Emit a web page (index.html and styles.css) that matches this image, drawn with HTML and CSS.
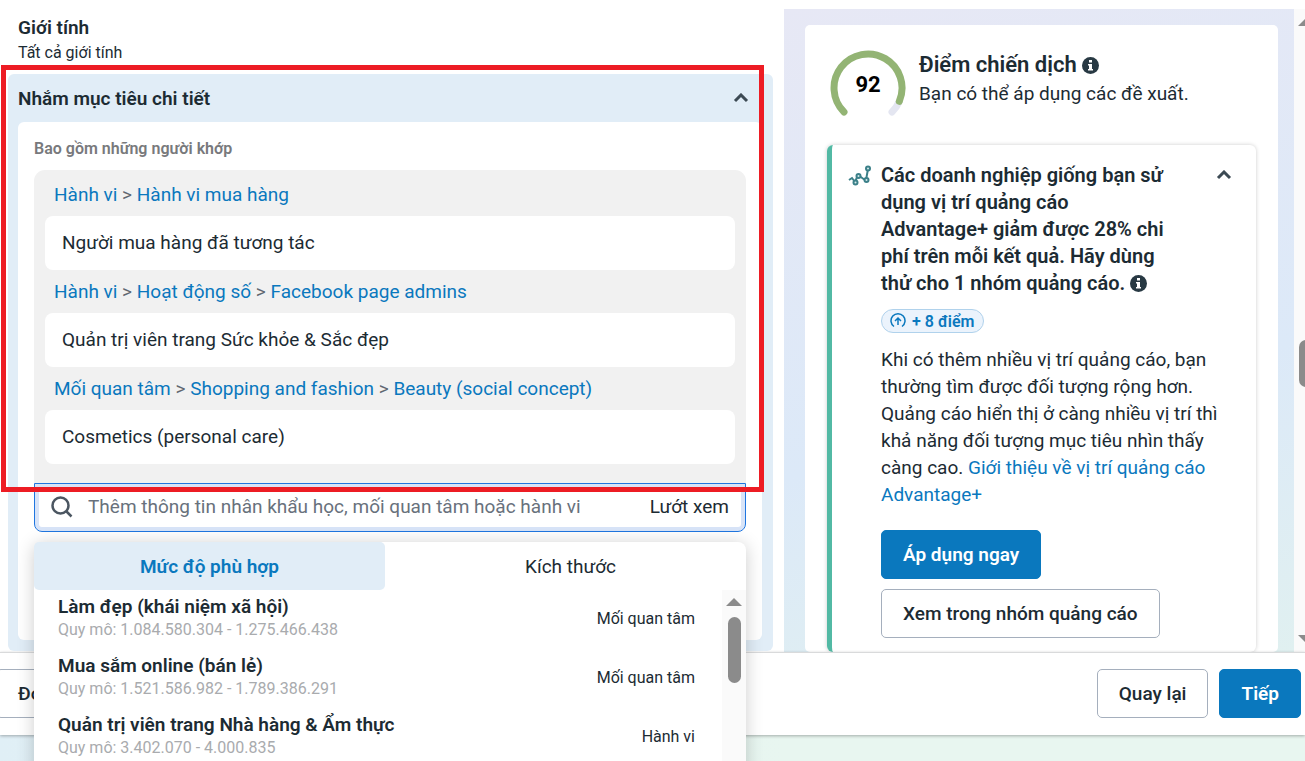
FILE: index.html
```html
<!DOCTYPE html>
<html lang="vi">

<head>
    <meta charset="UTF-8">
    <meta name="viewport" content="width=device-width, initial-scale=1.0">
    <title>Nhóm quảng cáo</title>
    <link rel="stylesheet" href="styles.css">
</head>

<body>
    <div class="workspace">
        <main class="editor">
            <div class="gender">
                <h3>Giới tính</h3>
                <p>Tất cả giới tính</p>
            </div>

            <section class="targeting">
                <header class="targeting-header">
                    <h3>Nhắm mục tiêu chi tiết</h3>
                    <button class="toggle" type="button" aria-label="Thu gọn">
                        <svg width="16" height="10" viewBox="0 0 16 10"><path d="M2 8l6-6 6 6" /></svg>
                    </button>
                </header>

                <div class="targeting-body">
                    <label class="include-label" for="search">Bao gồm những người khớp</label>

                    <div class="picker">
                        <div class="crumbs"><a href="#">Hành vi</a> &gt; <a href="#">Hành vi mua hàng</a></div>
                        <div class="picked">Người mua hàng đã tương tác</div>
                        <div class="crumbs"><a href="#">Hành vi</a> &gt; <a href="#">Hoạt động số</a> &gt; <a href="#">Facebook page admins</a></div>
                        <div class="picked">Quản trị viên trang Sức khỏe &amp; Sắc đẹp</div>
                        <div class="crumbs"><a href="#">Mối quan tâm</a> &gt; <a href="#">Shopping and fashion</a> &gt; <a href="#">Beauty (social concept)</a></div>
                        <div class="picked">Cosmetics (personal care)</div>
                    </div>

                    <div class="search">
                        <div class="search-box">
                            <svg width="22" height="22" viewBox="0 0 22 22"><circle cx="9.5" cy="9.5" r="8" /><path d="M15.5 15.5l5 5" /></svg>
                            <input id="search" type="text" placeholder="Thêm thông tin nhân khẩu học, mối quan tâm hoặc hành vi">
                            <button type="button">Lướt xem</button>
                        </div>

                        <div class="dropdown">
                            <div class="tabs">
                                <button class="tab active" type="button">Mức độ phù hợp</button>
                                <button class="tab" type="button">Kích thước</button>
                            </div>
                            <div class="results">
                                <ul>
                                    <li>
                                        <div>
                                            <strong>Làm đẹp (khái niệm xã hội)</strong>
                                            <small>Quy mô: 1.084.580.304 - 1.275.466.438</small>
                                        </div>
                                        <span>Mối quan tâm</span>
                                    </li>
                                    <li>
                                        <div>
                                            <strong>Mua sắm online (bán lẻ)</strong>
                                            <small>Quy mô: 1.521.586.982 - 1.789.386.291</small>
                                        </div>
                                        <span>Mối quan tâm</span>
                                    </li>
                                    <li>
                                        <div>
                                            <strong>Quản trị viên trang Nhà hàng &amp; Ẩm thực</strong>
                                            <small>Quy mô: 3.402.070 - 4.000.835</small>
                                        </div>
                                        <span>Hành vi</span>
                                    </li>
                                </ul>
                                <div class="results-scroll">
                                    <svg width="16" height="8" viewBox="0 0 16 8"><path d="M0 8l8-8 8 8z" /></svg>
                                    <i></i>
                                </div>
                            </div>
                        </div>
                    </div>
                </div>
            </section>

            <div class="highlight"></div>
        </main>

        <aside class="side">
            <div class="score-card">
                <div class="score">
                    <div class="gauge">
                        <svg width="76" height="76" viewBox="0 0 76 76">
                            <path class="track" d="M62 62A34 34 0 0 0 69.300 51.300" />
                            <path class="value" d="M14 62A34 34 0 1 1 69.300 51.300" />
                        </svg>
                        <b>92</b>
                    </div>
                    <div>
                        <h2>Điểm chiến dịch
                            <svg class="info" width="17" height="17" viewBox="0 0 17 17"><circle cx="8.500" cy="8.500" r="8.500" /><path d="M7 3h3v2.500H7zM6 7h4v5h1v1.500H6V12h1V8.500H6z" /></svg>
                        </h2>
                        <p>Bạn có thể áp dụng các đề xuất.</p>
                    </div>
                </div>

                <article class="tip">
                    <svg class="tip-icon" width="24" height="22" viewBox="0 0 24 22">
                        <path d="M1 15l3-2 3 4M7 17l3-7M10 10l7 5M18 15l2-11" />
                        <circle cx="7.500" cy="17.500" r="2" />
                        <circle cx="10.500" cy="11" r="2" />
                        <circle cx="18.500" cy="15" r="2" />
                        <circle cx="20" cy="3.500" r="2" />
                    </svg>
                    <div class="tip-content">
                        <div class="tip-header">
                            <h3>
                                Các doanh nghiệp giống bạn sử<br>
                                dụng vị trí quảng cáo<br>
                                Advantage+ giảm được 28% chi<br>
                                phí trên mỗi kết quả. Hãy dùng<br>
                                thử cho 1 nhóm quảng cáo.
                                <svg class="info" width="17" height="17" viewBox="0 0 17 17"><circle cx="8.500" cy="8.500" r="8.500" /><path d="M7 3h3v2.500H7zM6 7h4v5h1v1.500H6V12h1V8.500H6z" /></svg>
                            </h3>
                            <button class="toggle" type="button" aria-label="Thu gọn">
                                <svg width="16" height="10" viewBox="0 0 16 10"><path d="M2 8l6-6 6 6" /></svg>
                            </button>
                        </div>
                        <span class="points">
                            <svg width="16" height="16" viewBox="0 0 16 16"><path d="M4 13.500a7 7 0 1 1 8 0M8 12V5M5 8l3-3 3 3" /></svg>
                            + 8 điểm
                        </span>
                        <p>Khi có thêm nhiều vị trí quảng cáo, bạn thường tìm được đối tượng rộng hơn. Quảng cáo hiển thị ở càng nhiều vị trí thì khả năng đối tượng mục tiêu nhìn thấy càng cao. <a href="#">Giới thiệu về vị trí quảng cáo Advantage+</a></p>
                        <button class="btn primary" type="button">Áp dụng ngay</button>
                        <button class="btn" type="button">Xem trong nhóm quảng cáo</button>
                    </div>
                </article>
            </div>

            <div class="side-scroll">
                <svg width="16" height="8" viewBox="0 0 16 8"><path d="M0 8l8-8 8 8z" /></svg>
                <i></i>
                <svg width="16" height="8" viewBox="0 0 16 8"><path d="M0 0l8 8 8-8z" /></svg>
            </div>
        </aside>
    </div>

    <footer class="footer">
        <button class="btn close" type="button">Đóng</button>
        <button class="btn" type="button">Quay lại</button>
        <button class="btn primary" type="button">Tiếp</button>
    </footer>
</body>

</html>
```

FILE: styles.css
```css
* {
    box-sizing: border-box;
}

body {
    margin: 0;
    height: 100vh;
    padding-bottom: 26px;
    display: flex;
    flex-direction: column;
    overflow: hidden;
    background: linear-gradient(90deg, #e0eff6, #e8f6f0 60%);
    color: #1c2b33;
    font-family: Roboto, "Liberation Sans", sans-serif;
    font-size: 19px;
    line-height: 27px;
}

h2, h3, p, ul {
    margin: 0;
    padding: 0;
}

h3 {
    font-size: 19px;
    font-weight: 600;
}

a {
    color: #0a78be;
    text-decoration: none;
}

button, input {
    font: inherit;
    color: inherit;
    border: none;
    background: none;
    padding: 0;
}

.workspace {
    flex: 1;
    min-height: 0;
    display: flex;
    background: #fff;
}

/* left column */
.editor {
    position: relative;
    z-index: 1;
    flex: 1;
    min-width: 0;
    display: flex;
    flex-direction: column;
    padding: 14px 11px 1px 8px;
}

.gender {
    height: 60px;
    padding-left: 10px;
}

.gender p {
    font-size: 16px;
    line-height: 24px;
}

.targeting {
    flex: 1;
    display: flex;
    flex-direction: column;
    padding: 0 11px 11px 10px;
    background: #e1edf7;
    border-radius: 6px;
}

.targeting-header {
    height: 48px;
    display: flex;
    align-items: center;
    justify-content: space-between;
    padding-right: 13px;
}

.toggle {
    display: flex;
    cursor: pointer;
}

.toggle path {
    fill: none;
    stroke: #3c4a54;
    stroke-width: 3;
}

.targeting-body {
    flex: 1;
    padding: 15px 16px 0;
    background: #fff;
    border-radius: 6px;
}

.include-label {
    display: block;
    height: 33px;
    line-height: 24px;
    font-size: 16px;
    font-weight: 600;
    color: #78797c;
}

.picker {
    padding: 3px 11px 19px;
    background: #f1f1f1;
    border-radius: 11px 11px 0 0;
}

.crumbs {
    padding: 8px 9px;
    color: #606770;
}

.picked {
    padding: 13px 17px 14px;
    background: #fff;
    border-radius: 8px;
}

.search {
    position: relative;
}

.search-box {
    display: flex;
    align-items: center;
    height: 49px;
    padding: 0 12px 2px;
    background: #fff;
    border: 1px solid #1f76e0;
    border-radius: 0 0 8px 8px;
    box-shadow: inset 0 0 0 4px #d8e4f8;
}

.search-box svg {
    margin: 0 15px 0 4px;
    fill: none;
    stroke: #4b5661;
    stroke-width: 2.5;
}

.search-box input {
    flex: 1;
    min-width: 0;
    outline: none;
}

.search-box input::placeholder {
    color: #68717c;
    opacity: 1;
}

.search-box button {
    margin-right: 4px;
}

.dropdown {
    position: absolute;
    top: 59px;
    left: 0;
    width: 100%;
    background: #fff;
    border-radius: 8px;
    box-shadow: 0 2px 18px rgba(0, 0, 0, 0.2);
}

.tabs {
    display: flex;
    height: 48px;
}

.tab {
    flex: 1;
    padding-left: 10px;
    border-radius: 5px;
}

.tab.active {
    flex: none;
    width: 351px;
    padding: 0;
    background: #e1edf7;
    color: #0a78be;
    font-weight: 600;
}

.results {
    display: flex;
}

.results ul {
    flex: 1;
    list-style: none;
    padding: 0 27px 30px 24px;
}

.results li {
    display: flex;
    align-items: center;
    justify-content: space-between;
    height: 59px;
    padding-bottom: 6px;
}

.results strong {
    display: block;
    font-weight: 600;
}

.results small {
    display: block;
    font-size: 16px;
    line-height: 20px;
    color: #a9abae;
}

.results span {
    margin-top: 4px;
    font-size: 16px;
}

.results-scroll {
    width: 24px;
    padding-top: 8px;
    display: flex;
    flex-direction: column;
    align-items: center;
    gap: 11px;
    background: #fafafa;
    fill: #8b8b8b;
}

.results-scroll i {
    width: 13px;
    height: 66px;
    border-radius: 7px;
    background: #8b8b8b;
}

/* red frame round the targeting block */
.highlight {
    position: absolute;
    top: 65px;
    left: 1px;
    right: 20px;
    height: 427px;
    border: 5px solid #ed1c24;
    pointer-events: none;
}

/* right column */
.side {
    width: 521px;
    margin-top: 9px;
    display: flex;
    overflow: hidden;
    background: linear-gradient(165deg, #e7e8f5, #dce9f8 60%, #e0f0f0);
}

.score-card {
    flex: 1;
    margin: 16px 16px 0 21px;
    padding: 25px 22px 0;
    background: #fff;
    border-radius: 5px;
}

.score {
    display: flex;
    gap: 13px;
    height: 95px;
    padding-left: 3px;
}

.score h2 {
    font-size: 22px;
    line-height: 30px;
    font-weight: 600;
}

.info {
    vertical-align: -2px;
    fill: #283943;
}

.info path {
    fill: #fff;
}

.gauge {
    display: grid;
    width: 76px;
    height: 76px;
}

.gauge svg,
.gauge b {
    grid-area: 1 / 1;
}

.gauge b {
    place-self: center;
    padding-bottom: 7px;
    font-size: 22px;
    color: #000;
}

.gauge path {
    fill: none;
    stroke-width: 7;
    stroke-linecap: round;
}

.gauge .track {
    stroke: #e4e6f1;
}

.gauge .value {
    stroke: #93b474;
}

.tip {
    display: flex;
    align-items: flex-start;
    padding: 17px 24px 14px 16px;
    border-left: 5px solid #52b9a4;
    border-radius: 6px;
    box-shadow: 0 0 4px rgba(0, 0, 0, 0.2);
}

.tip-icon {
    flex: none;
    margin: 3px 9px 0 0;
    fill: #d3e9ea;
    stroke: #3c8089;
    stroke-width: 2;
}

.tip-icon path {
    fill: none;
}

.tip-content {
    flex: 1;
    display: flex;
    flex-direction: column;
    align-items: flex-start;
}

.tip-header {
    width: 100%;
    display: flex;
    align-items: flex-start;
    justify-content: space-between;
}

.tip-header h3 {
    font-size: 20px;
}

.tip .toggle {
    margin-top: 8px;
}

.points {
    display: flex;
    align-items: center;
    gap: 6px;
    height: 24px;
    margin: 12px 0 13px;
    padding: 0 8px;
    border: 1px solid #b0d2ec;
    border-radius: 12px;
    background: #ebf3fc;
    color: #0a78be;
    font-size: 16px;
    font-weight: 600;
}

.points svg {
    fill: none;
    stroke: #0a78be;
    stroke-width: 1.5;
}

.tip-content p {
    margin-bottom: 22px;
}

.btn {
    height: 49px;
    padding: 0 21px;
    border: 1px solid #a5afbd;
    border-radius: 5px;
    background: #fff;
    font-weight: 500;
    cursor: pointer;
}

.btn.primary {
    border-color: #0a78be;
    background: #0a78be;
    color: #fff;
    font-weight: 600;
}

.tip-content .primary {
    margin-bottom: 10px;
}

.side-scroll {
    width: 11px;
    padding: 9px 0;
    display: flex;
    flex-direction: column;
    justify-content: space-between;
    background: #fafafa;
    fill: #8b8b8b;
}

.side-scroll svg {
    flex: none;
    margin-left: 4px;
}

.side-scroll i {
    width: 14px;
    height: 47px;
    margin: 66px 0 0 5px;
    border-radius: 7px;
    background: #8b8b8b;
}

.footer {
    display: flex;
    align-items: center;
    gap: 11px;
    height: 83px;
    padding: 0 4px 2px 0;
    background: #fff;
    border-top: 1px solid #d9dadb;
    box-shadow: 0 1px 3px rgba(0, 0, 0, 0.3);
}

.footer .close {
    margin: 0 auto 0 -4px;
}
```
